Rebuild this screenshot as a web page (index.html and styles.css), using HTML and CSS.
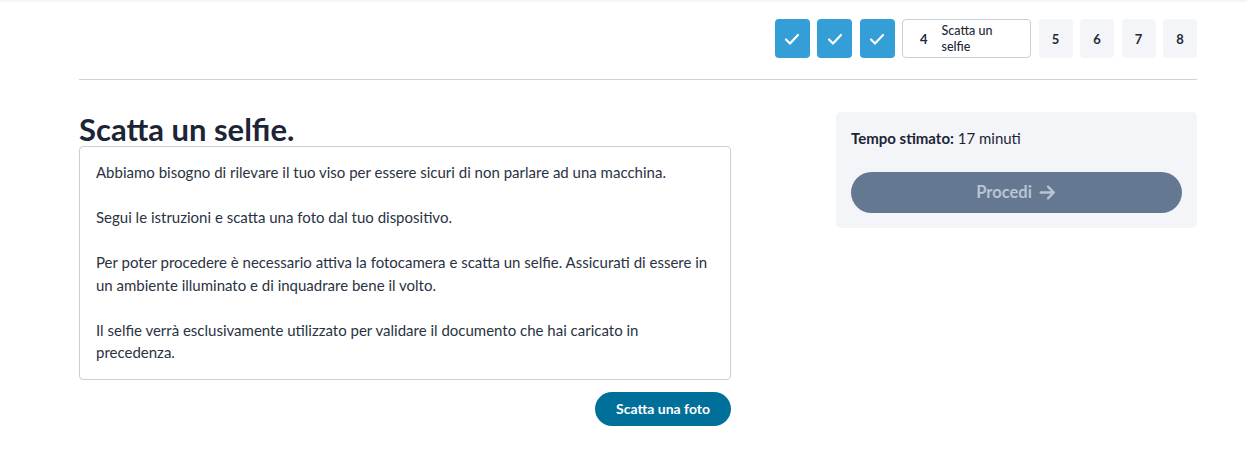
FILE: index.html
```html
<!DOCTYPE html>
<html lang="it">
<head>
<meta charset="utf-8">
<title>Scatta un selfie</title>
<link rel="stylesheet" href="styles.css">
</head>
<body>
<div class="topshade"></div>
<div class="page">
  <header class="stepper">
    <div class="step done"><svg viewBox="0 0 18 18" width="18" height="18"><path d="M3 9.5l4 4 8-8.5" fill="none" stroke="#fff" stroke-width="2.2" stroke-linecap="round" stroke-linejoin="round"/></svg></div>
    <div class="step done"><svg viewBox="0 0 18 18" width="18" height="18"><path d="M3 9.5l4 4 8-8.5" fill="none" stroke="#fff" stroke-width="2.2" stroke-linecap="round" stroke-linejoin="round"/></svg></div>
    <div class="step done"><svg viewBox="0 0 18 18" width="18" height="18"><path d="M3 9.5l4 4 8-8.5" fill="none" stroke="#fff" stroke-width="2.2" stroke-linecap="round" stroke-linejoin="round"/></svg></div>
    <div class="step current"><span class="num">4</span><span class="label">Scatta un selfie</span></div>
    <div class="step todo">5</div>
    <div class="step todo">6</div>
    <div class="step todo">7</div>
    <div class="step todo">8</div>
  </header>
  <hr class="divider">
  <main class="content">
    <section class="left">
      <h1 class="title">Scatta un selfie.</h1>
      <div class="textbox">
        <p>Abbiamo bisogno di rilevare il tuo viso per essere sicuri di non parlare ad una macchina.</p>
        <p>Segui le istruzioni e scatta una foto dal tuo dispositivo.</p>
        <p>Per poter procedere è necessario attiva la fotocamera e scatta un selfie. Assicurati di essere in un ambiente illuminato e di inquadrare bene il volto.</p>
        <p>Il selfie verrà esclusivamente utilizzato per validare il documento che hai caricato in precedenza.</p>
      </div>
      <div class="actions"><button class="photo-btn">Scatta una foto</button></div>
    </section>
    <aside class="card">
      <p class="time"><strong>Tempo stimato:</strong> 17 minuti</p>
      <button class="proceed">Procedi <svg viewBox="0 0 18 18" width="19" height="19"><path d="M2.5 9h12.5M9.5 3.5L15 9l-5.5 5.5" fill="none" stroke="currentColor" stroke-width="2.2" stroke-linecap="round" stroke-linejoin="round"/></svg></button>
    </aside>
  </main>
</div>
</body>
</html>
```
FILE: styles.css
```css
* { box-sizing: border-box; }
html, body { margin: 0; padding: 0; background: #fff; }
body {
  font-family: Lato, "Noto Sans", "Liberation Sans", sans-serif;
  color: #1f2937;
}
.topshade {
  height: 3px;
  background: linear-gradient(#f1f1f1, #fff);
}
.page {
  margin-left: 79px;
  width: 1118px;
}
.stepper {
  display: flex;
  justify-content: flex-end;
  gap: 7.5px;
  padding-top: 16px;
}
.step {
  height: 39px;
  min-width: 35px;
  border-radius: 4px;
  display: flex;
  align-items: center;
  justify-content: center;
  font-size: 13px;
  font-weight: 700;
  color: #1f2937;
}
.step.done { background: #349fd7; }
.step.todo { background: #f4f5f9; width: 34px; min-width: 34px; }
.step.current {
  width: 129px;
  border: 1px solid #c6d0d9;
  justify-content: flex-start;
  padding-left: 17px;
  gap: 14px;
}
.step.current .num { font-weight: 700; }
.step.current .label {
  font-size: 12.5px;
  line-height: 16px;
  font-weight: 500;
  width: 66px;
}
.divider {
  border: 0;
  border-top: 1px solid #cdd3d9;
  margin: 21px 0 0;
}
.content {
  display: flex;
  justify-content: space-between;
  align-items: flex-start;
  padding-top: 32px;
}
.left { width: 652px; }
.title {
  margin: 0;
  font-size: 31px;
  line-height: 34px;
  font-weight: 700;
  color: #1c2536;
  letter-spacing: 0;
}
.textbox {
  border: 1px solid #c6d0d9;
  border-radius: 4px;
  padding: 14px 16px 15px;
  font-size: 15px;
  line-height: 22.5px;
  color: #2a3342;
}
.textbox p { margin: 0 0 22.5px; }
.textbox p:last-child { margin-bottom: 0; }
.actions {
  display: flex;
  justify-content: flex-end;
  margin-top: 12px;
}
.photo-btn {
  font-family: inherit;
  height: 34px;
  width: 136px;
  border: 0;
  border-radius: 17px;
  background: #00709a;
  color: #fff;
  font-size: 14px;
  font-weight: 700;
}
.card {
  width: 361px;
  background: #f4f5f9;
  border-radius: 5px;
  padding: 15px;
}
.time {
  margin: 0;
  font-size: 15px;
  line-height: 22.5px;
  color: #1c2536;
}
.time strong { font-weight: 700; }
.proceed {
  font-family: inherit;
  margin-top: 22px;
  width: 100%;
  height: 41px;
  border: 0;
  border-radius: 21px;
  background: #647891;
  color: #b9c5d2;
  font-size: 16.5px;
  font-weight: 700;
  display: flex;
  align-items: center;
  justify-content: center;
  gap: 6px;
}
```
